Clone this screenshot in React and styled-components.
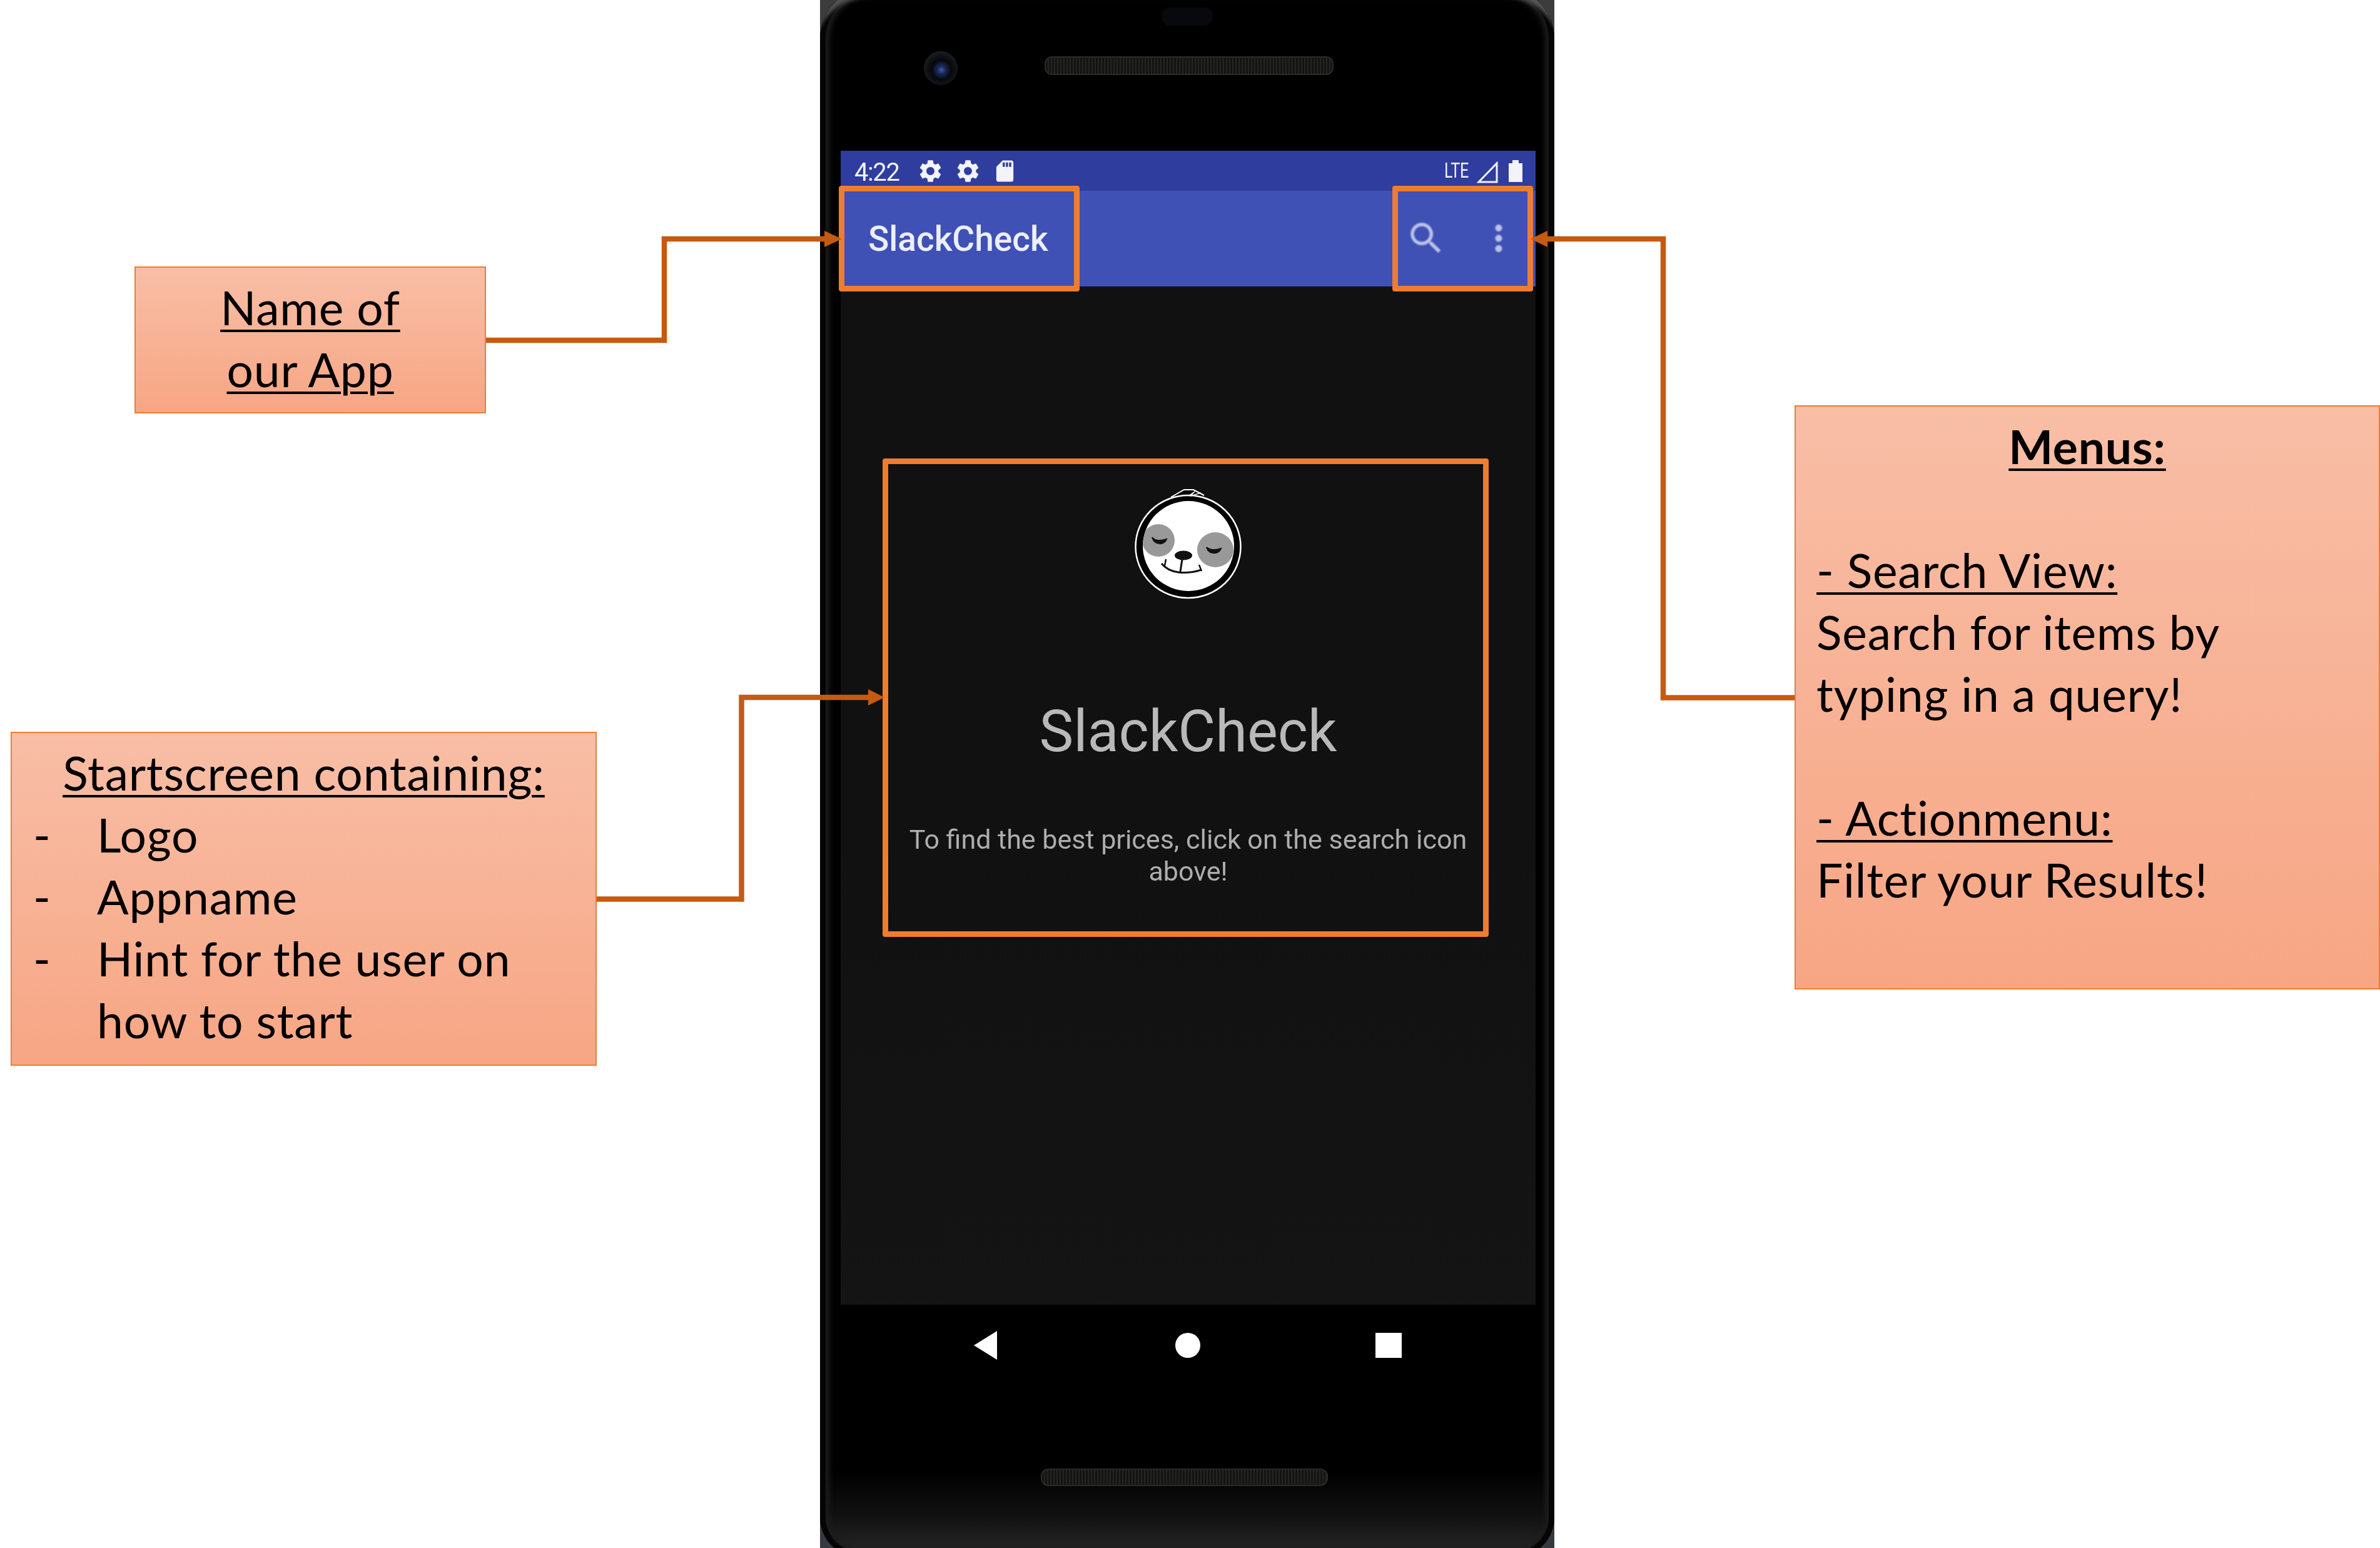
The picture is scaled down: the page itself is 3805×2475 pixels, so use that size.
import React from "react";
import styled, { createGlobalStyle } from "styled-components";
import { MdSettings, MdSdCard, MdSearch, MdMoreVert } from "react-icons/md";

const GlobalStyle = createGlobalStyle`
  html, body {
    margin: 0;
    padding: 0;
    background: #fff;
  }
`;

const Page = styled.div`
  position: relative;
  width: 3805px;
  height: 2475px;
  overflow: hidden;
  display: grid;
  grid-template-columns: 1311px 1174px 1320px;
`;

const NotesColumn = styled.div`
  display: flex;
  flex-direction: column;
  align-items: flex-start;
  padding-top: ${(p) => p.$top}px;
  padding-left: ${(p) => p.$left || 0}px;
`;

const Callout = styled.div`
  box-sizing: border-box;
  width: ${(p) => p.$width}px;
  height: ${(p) => p.$height}px;
  margin-left: ${(p) => p.$left || 0}px;
  margin-top: ${(p) => p.$top || 0}px;
  padding: 14px 0 0 ${(p) => p.$padLeft || 0}px;
  border: 2px solid #ed7d31;
  background: linear-gradient(to bottom, #f8bea6, #f7a684);
  color: #000;
  font-family: Lato, "Open Sans", sans-serif;
  font-size: 75px;
  line-height: 99px;
  letter-spacing: 0.8px;
`;

const Line = styled.div`
  white-space: nowrap;
  text-align: ${(p) => (p.$center ? "center" : "left")};
  text-decoration: ${(p) => (p.$under ? "underline" : "none")};
  text-decoration-thickness: 4px;
  text-underline-offset: 7px;
  font-weight: ${(p) => (p.$bold ? 700 : 400)};
  margin-top: ${(p) => (p.$gap ? 99 : 0)}px;
  margin-left: ${(p) => p.$shift || 0}px;
`;

const ListItem = styled.div`
  display: grid;
  grid-template-columns: 102px 1fr;
  padding-left: 34px;
`;

const Phone = styled.div`
  background: linear-gradient(to bottom, #3c3c3c, #353a3f);
  height: 2475px;
  overflow: hidden;
`;

/* body runs past the page at top and bottom, only the corner arcs stay in view */
const PhoneBody = styled.div`
  display: flex;
  flex-direction: column;
  height: 2510px;
  margin-top: -20px;
  box-sizing: border-box;
  border-radius: 82px 82px 64px 64px;
  background: linear-gradient(to bottom, #000 2370px, #101010 2440px, #262626 2500px);
  box-shadow: inset 0 26px 6px -12px #555, inset 0 0 0 9px #050505, inset 0 0 8px 15px #1c1c1c;
`;

const Head = styled.div`
  height: 261px;
  padding-top: 32px;
  box-sizing: border-box;
  display: flex;
  flex-direction: column;
`;

const Pill = styled.div`
  align-self: center;
  width: 82px;
  height: 29px;
  border-radius: 14px;
  background: #07090c;
`;

const HeadRow = styled.div`
  display: flex;
  margin-top: 41px;
  padding-left: 166px;
`;

const Camera = styled.div`
  width: 54px;
  height: 54px;
  border-radius: 50%;
  background: radial-gradient(circle at 52% 55%, #3a5fb0 0, #1c2c5c 14%, #07080d 38%, #14161a 62%, #2a2c2f 88%, #0a0a0a 100%);
`;

const Speaker = styled.div`
  flex: none;
  box-sizing: border-box;
  width: ${(p) => p.$width}px;
  height: ${(p) => p.$height}px;
  margin-left: ${(p) => p.$left}px;
  margin-top: ${(p) => p.$top}px;
  border-radius: 12px;
  border: 2px solid #2a2a28;
  background: repeating-linear-gradient(to right, #141412 0, #141412 3px, #252522 3px, #252522 5px);
`;

const Screen = styled.div`
  flex: none;
  display: flex;
  flex-direction: column;
  height: 1845px;
  margin: 0 30px 0 33px;
  background: linear-gradient(to bottom, #111 60%, #141414);
  font-family: Roboto, sans-serif;
`;

const StatusBar = styled.div`
  display: flex;
  align-items: center;
  height: 64px;
  padding: 4px 21px 0 22px;
  box-sizing: border-box;
  background: #2f3d9e;
  color: #f2f3fb;
  filter: blur(0.6px);
`;

const Clock = styled.span`
  font-size: 40px;
  letter-spacing: -1.4px;
  margin-right: 28px;
`;

const StatusIcon = styled.span`
  display: flex;
  margin-left: ${(p) => p.$left || 0}px;
  margin-right: ${(p) => p.$gap || 0}px;
  margin-top: -4px;
`;

const Network = styled.span`
  margin-left: auto;
  width: 44px;
  font-size: 33px;
  transform: scaleX(0.76);
  transform-origin: left center;
  margin-right: 8px;
  margin-top: -6px;
  white-space: nowrap;
`;

const Toolbar = styled.div`
  display: flex;
  align-items: center;
  justify-content: space-between;
  height: 153px;
  padding-right: 4px;
  background: #3f51b5;
`;

const MarkBox = styled.div`
  box-sizing: border-box;
  flex: none;
  display: flex;
  align-items: center;
  width: ${(p) => p.$width}px;
  height: 169px;
  margin-left: ${(p) => p.$left || 0}px;
  padding-left: ${(p) => p.$pad}px;
  border: 9px solid #ed7d31;
  border-radius: 4px;
  position: relative;
`;

const ToolbarTitle = styled.div`
  font-size: 55px;
  font-weight: 500;
  color: #eceefa;
  filter: blur(0.7px);
`;

const ActionIcons = styled.div`
  display: flex;
  gap: 50px;
  color: #bcc3e8;
  filter: blur(0.9px);
  margin-top: -2px;
`;

const StartFrame = styled.div`
  box-sizing: border-box;
  width: 969px;
  height: 765px;
  margin: 275px 0 0 67px;
  padding: 17px 0 0 8px;
  border: 9px solid #ed7d31;
  border-radius: 4px;
  display: flex;
  flex-direction: column;
  align-items: center;
`;

const LogoSvg = styled.svg`
  flex: none;
  margin-bottom: 137px;
`;

const AppName = styled.div`
  font-size: 92px;
  line-height: 108px;
  color: #b9b9b9;
  filter: blur(0.7px);
`;

const Hint = styled.div`
  margin-top: 93px;
  font-size: 43px;
  line-height: 51px;
  color: #adadad;
  text-align: center;
  white-space: nowrap;
  filter: blur(0.7px);
`;

const NavBar = styled.div`
  flex: none;
  display: flex;
  justify-content: space-between;
  align-items: flex-start;
  height: 262px;
  padding: 45px 244px 0 246px;
  box-sizing: border-box;
`;

const NavDot = styled.div`
  width: 40px;
  height: 40px;
  margin-left: 5px;
  border-radius: 50%;
  background: #fff;
`;

const NavSquare = styled.div`
  width: 42px;
  height: 40px;
  background: #fff;
`;

const NavBack = styled.svg`
  margin-top: -3px;
`;

const Connectors = styled.svg`
  position: absolute;
  top: 0;
  left: 0;
  pointer-events: none;
`;

function Logo() {
  return (
    <LogoSvg width="300" height="220" viewBox="0 0 300 220">
      <path d="M122 36 L143 24 L158 24 L175 33" fill="#000" stroke="#fff" strokeWidth="2" />
      <ellipse cx="149.5" cy="115" rx="84" ry="82" fill="#000" stroke="#fff" strokeWidth="2.5" />
      <path d="M150 34 L160 27 L153 34 L170 29" stroke="#fff" strokeWidth="1.5" fill="none" />
      <clipPath id="face">
        <ellipse cx="150" cy="114" rx="73" ry="72" />
      </clipPath>
      <g clipPath="url(#face)">
        <rect x="70" y="30" width="160" height="170" fill="#fff" />
        <ellipse cx="102" cy="105" rx="26" ry="26" fill="#999" />
        <ellipse cx="193" cy="120" rx="29" ry="28" fill="#999" />
      </g>
      <path d="M92 100 C96 106 106 106 115 103 C112 112 96 114 92 100 Z" fill="#111" stroke="#111" strokeWidth="2" />
      <path d="M179 116 C184 121 194 121 202 118 C199 127 183 129 179 116 Z" fill="#111" stroke="#111" strokeWidth="2" />
      <ellipse cx="142" cy="129" rx="14" ry="7.5" fill="#111" />
      <path d="M140 135 L137 155" stroke="#111" strokeWidth="3" fill="none" />
      <path d="M107 142 C120 158 145 160 171 152" stroke="#111" strokeWidth="3" fill="none" />
      <path d="M114 135 L112 146 M167 144 L171 154" stroke="#111" strokeWidth="2.5" fill="none" />
    </LogoSvg>
  );
}

export default function App() {
  return (
    <Page>
      <GlobalStyle />

      <NotesColumn $top={426}>
        <Callout $width={562} $height={235} $left={215}>
          <Line $center $under>Name of</Line>
          <Line $center $under>our App</Line>
        </Callout>
        <Callout $width={937} $height={534} $left={17} $top={509}>
          <Line $center $under>Startscreen containing:</Line>
          <ListItem><span>-</span><span>Logo</span></ListItem>
          <ListItem><span>-</span><span>Appname</span></ListItem>
          <ListItem>
            <span>-</span>
            <span>Hint for the user on<br />how to start</span>
          </ListItem>
        </Callout>
      </NotesColumn>

      <Phone>
        <PhoneBody>
          <Head>
            <Pill />
            <HeadRow>
              <Camera />
              <Speaker $width={462} $height={30} $left={139} $top={8} />
            </HeadRow>
          </Head>

          <Screen>
            <StatusBar>
              <Clock>4:22</Clock>
              <StatusIcon $gap={17}><MdSettings size={43} /></StatusIcon>
              <StatusIcon $gap={17}><MdSettings size={43} /></StatusIcon>
              <StatusIcon><MdSdCard size={41} /></StatusIcon>
              <Network>LTE</Network>
              <svg width="34" height="35" viewBox="0 0 34 35">
                <path d="M3 33 L32 3 V33 Z" fill="none" stroke="currentColor" strokeWidth="3" />
              </svg>
              <StatusIcon $left={17}>
                <svg width="22" height="35" viewBox="0 0 22 35">
                  <path d="M0 5 H6 V0 H16 V5 H22 V35 H0 Z" fill="currentColor" />
                </svg>
              </StatusIcon>
            </StatusBar>

            <Toolbar>
              <MarkBox $width={385} $left={-3} $pad={38}>
                <ToolbarTitle>SlackCheck</ToolbarTitle>
              </MarkBox>
              <MarkBox $width={225} $pad={12}>
                <ActionIcons>
                  <MdSearch size={66} />
                  <MdMoreVert size={66} />
                </ActionIcons>
              </MarkBox>
            </Toolbar>

            <StartFrame>
              <Logo />
              <AppName>SlackCheck</AppName>
              <Hint>
                To find the best prices, click on the search icon
                <br />
                above!
              </Hint>
            </StartFrame>
          </Screen>

          <NavBar>
            <NavBack width="37" height="46" viewBox="0 0 37 46">
              <path d="M37 0 V46 L0 23 Z" fill="#fff" />
            </NavBack>
            <NavDot />
            <NavSquare />
          </NavBar>

          <Speaker $width={459} $height={28} $left={353} $top={0} />
        </PhoneBody>
      </Phone>

      <NotesColumn $top={648} $left={384}>
        <Callout $width={936} $height={934} $padLeft={33}>
          <Line $center $under $bold $shift={-33}>Menus:</Line>
          <Line $under $gap>- Search View:</Line>
          <Line>Search for items by</Line>
          <Line>typing in a query!</Line>
          <Line $under $gap>- Actionmenu:</Line>
          <Line>Filter your Results!</Line>
        </Callout>
      </NotesColumn>

      <Connectors width="3805" height="2475" viewBox="0 0 3805 2475">
        <g fill="none" stroke="#c55a11" strokeWidth="8.5">
          <polyline points="777,544 1062,544 1062,382 1320,382" />
          <polyline points="954,1437.5 1185.5,1437.5 1185.5,1115 1390,1115" />
          <polyline points="2869,1115.5 2659,1115.5 2659,382 2472,382" />
        </g>
        <g fill="#c55a11">
          <polygon points="1346,382 1318,369 1318,395" />
          <polygon points="1414,1115 1388,1102 1388,1128" />
          <polygon points="2447,382 2474,369 2474,395" />
        </g>
      </Connectors>
    </Page>
  );
}
